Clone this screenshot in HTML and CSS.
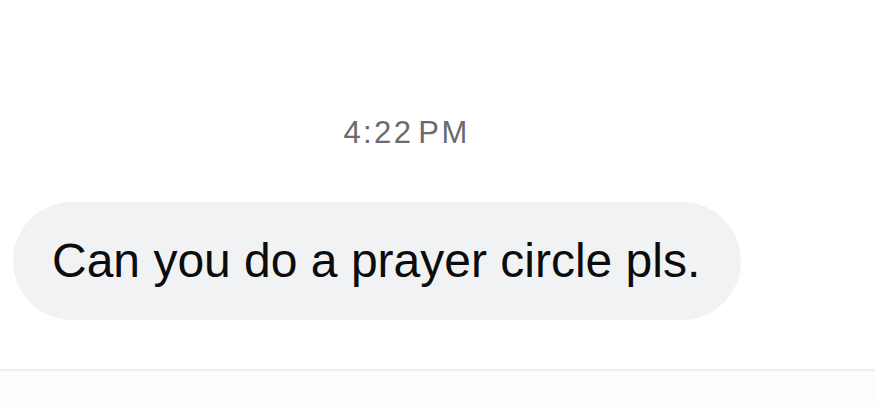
FILE: index.html
```html
<!DOCTYPE html>
<html>
<head>
<meta charset="utf-8">
<link rel="stylesheet" href="styles.css">
</head>
<body>
<main class="thread">
  <div class="time">4:22&#8202;PM</div>
  <div class="row">
    <div class="bubble">Can you do a prayer circle pls.</div>
  </div>
</main>
<footer class="composer"></footer>
</body>
</html>
```
FILE: styles.css
```css
html, body {
  margin: 0;
  padding: 0;
  background: #ffffff;
}
body {
  width: 875px;
  height: 407px;
  overflow: hidden;
  font-family: "Liberation Sans", Arial, sans-serif;
}
.thread {
  height: 369px;
  display: flex;
  flex-direction: column;
}
.time {
  margin-top: 114px;
  padding-right: 62px;
  text-align: center;
  font-size: 31px;
  line-height: 37px;
  letter-spacing: 2.4px;
  color: #6a6a6f;
}
.row {
  margin-top: 51px;
  padding-left: 13px;
  display: flex;
}
.bubble {
  background: #f1f2f4;
  border-radius: 59px;
  height: 118px;
  line-height: 118px;
  padding: 0 41px 0 39px;
  font-size: 48px;
  color: #0c0c0c;
  white-space: nowrap;
}
.composer {
  border-top: 1px solid #e6e6e6;
  box-shadow: 0 2px 0 #f6f6f6 inset;
  height: 37px;
  background: #fdfdfd;
}
```
